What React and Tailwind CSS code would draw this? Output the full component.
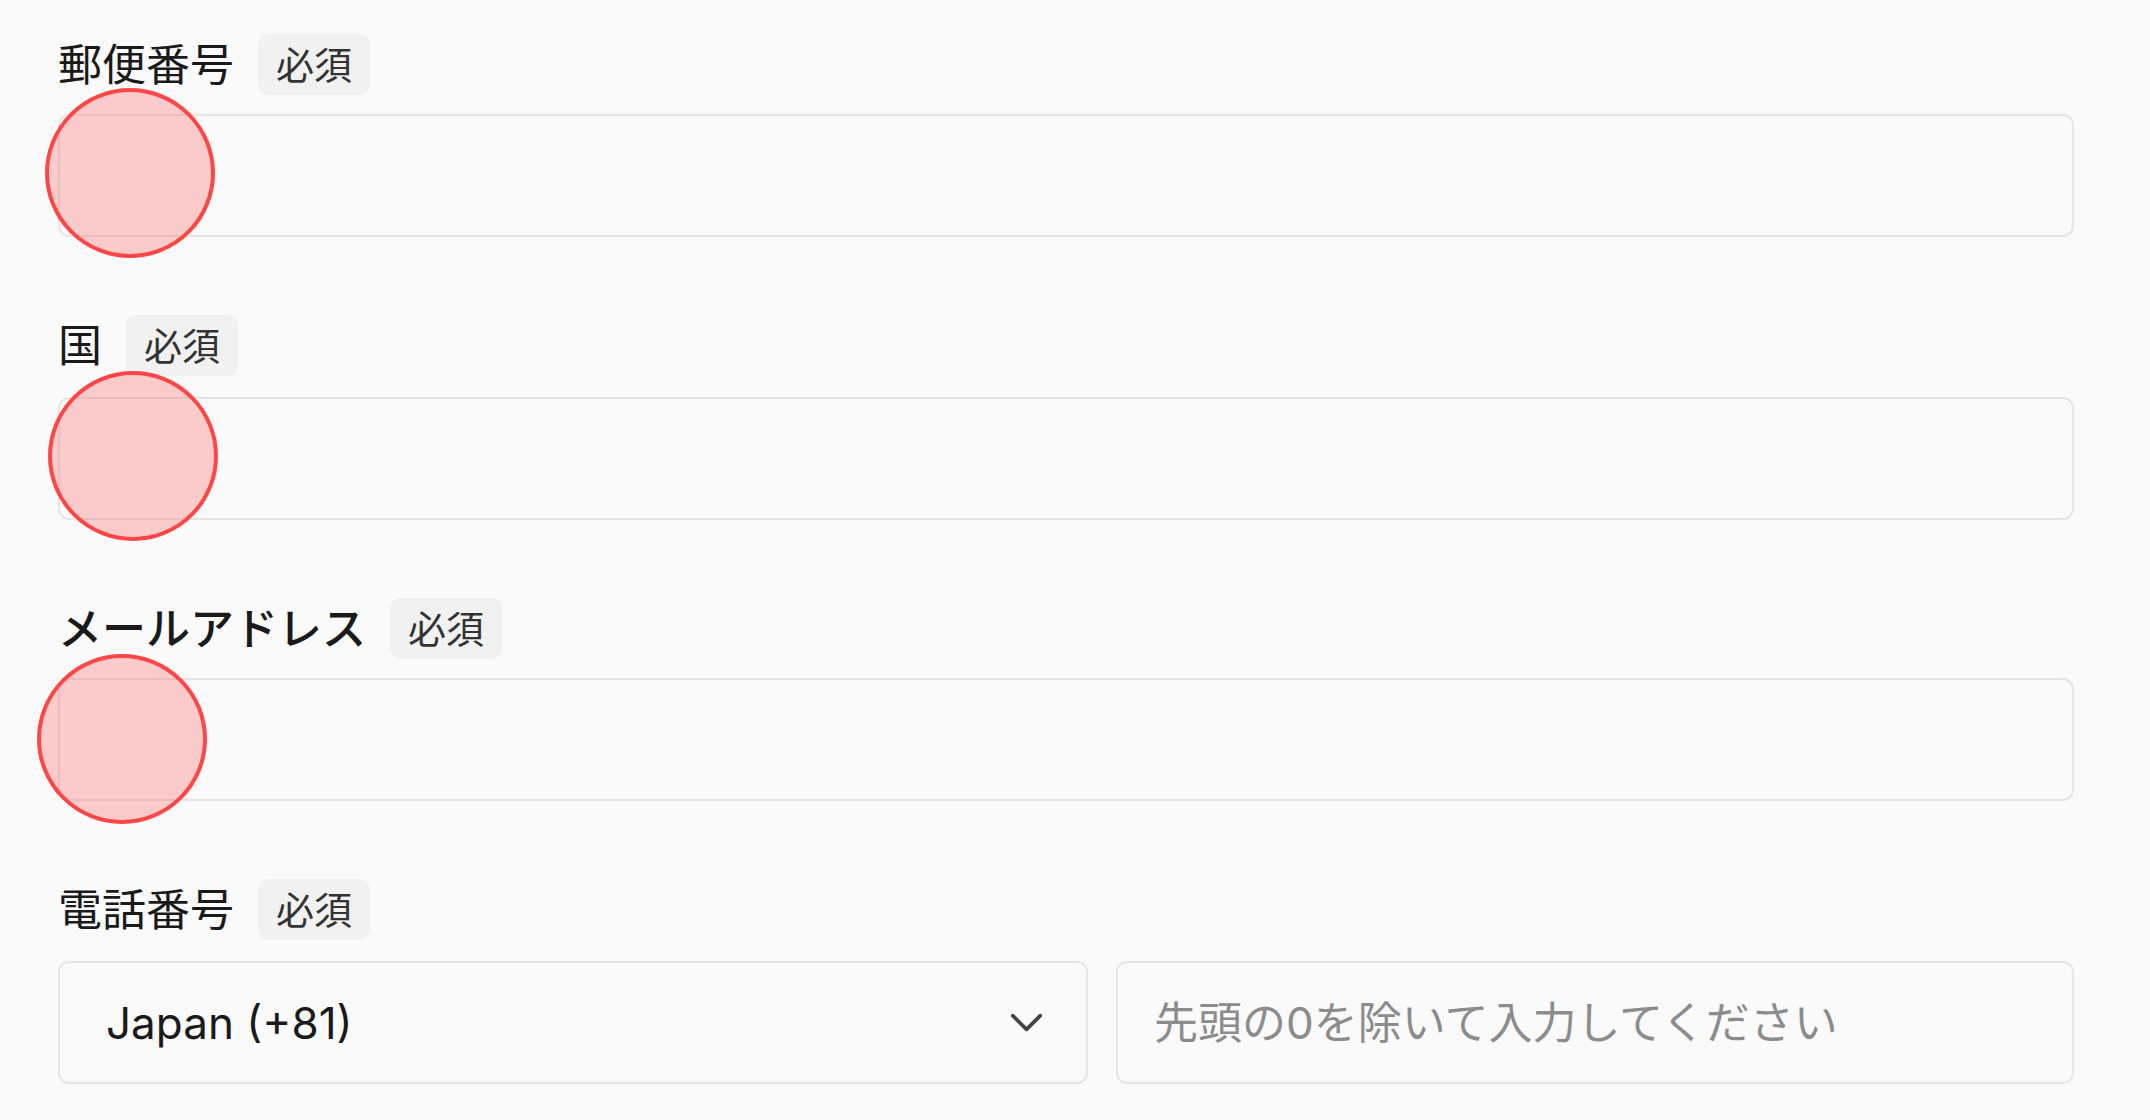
import React from 'react';
import { ChevronDown } from 'lucide-react';

const jp = { fontFamily: 'Inter, "Noto Sans CJK JP", sans-serif' };

function Badge() {
  return (
    <span className="h-[61px] px-[18px] flex items-center rounded-[11px] bg-[#f1f1f1] text-[38px] text-[#333333] leading-none">
      必須
    </span>
  );
}

function FieldLabel({ children, strong }) {
  return (
    <div className="h-[61px] flex items-center gap-[24px]">
      <span className={`text-[44px] leading-none text-[#1a1a1a] ${strong ? 'font-medium' : 'font-normal'}`}>
        {children}
      </span>
      <Badge />
    </div>
  );
}

function TextInput({ placeholder = '' }) {
  return (
    <input
      type="text"
      placeholder={placeholder}
      className="w-full h-[123px] px-[36px] rounded-[11px] border-2 border-[#e6e6e6] bg-[#fafafa] text-[44px] text-[#1a1a1a] placeholder:text-[#8c8c8c] outline-none"
      style={jp}
    />
  );
}

// red annotation circles drawn over the fields
function Marker({ className }) {
  return (
    <div className={`absolute w-[170px] h-[170px] rounded-full border-4 border-[#ff4747] bg-[rgba(255,77,77,0.27)] ${className}`} />
  );
}

export default function App() {
  return (
    <div className="relative min-h-[1120px] bg-[#fafafa] pl-[58px] pr-[76px] pt-[34px]" style={jp}>
      <div className="flex flex-col">
        <FieldLabel>郵便番号</FieldLabel>
        <div className="mt-[19px]">
          <TextInput />
        </div>

        <div className="mt-[78px]">
          <FieldLabel>国</FieldLabel>
        </div>
        <div className="mt-[21px]">
          <TextInput />
        </div>

        <div className="mt-[78px]">
          <FieldLabel strong>メールアドレス</FieldLabel>
        </div>
        <div className="mt-[19px]">
          <TextInput />
        </div>

        <div className="mt-[78px]">
          <FieldLabel>電話番号</FieldLabel>
        </div>
        <div className="mt-[21px] flex gap-[28px]">
          <div className="w-[1030px] h-[123px] shrink-0 flex items-center justify-between pl-[46px] pr-[32px] rounded-[11px] border-2 border-[#e6e6e6] bg-[#fafafa]">
            <span className="text-[44px] text-[#1a1a1a] leading-none">Japan (+81)</span>
            <ChevronDown size={55} strokeWidth={1.6} className="text-[#444444]" />
          </div>
          <div className="flex-1">
            <TextInput placeholder="先頭の0を除いて入力してください" />
          </div>
        </div>
      </div>

      <Marker className="left-[45px] top-[88px]" />
      <Marker className="left-[48px] top-[371px]" />
      <Marker className="left-[37px] top-[654px]" />
    </div>
  );
}
